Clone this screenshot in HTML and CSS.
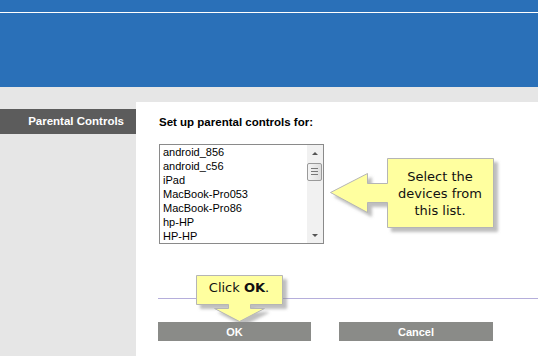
FILE: index.html
```html
<!DOCTYPE html>
<html lang="en">

<head>
	<meta charset="utf-8">
	<title>Parental Controls</title>
	<link rel="stylesheet" href="styles.css">
</head>

<body>
	<div class="header">
		<div class="headerLine"></div>
	</div>

	<div class="main">
		<div class="sidebar">
			<div class="tab">Parental Controls</div>
		</div>

		<div class="panel">
			<h3 class="title">Set up parental controls for:</h3>

			<div class="listBox">
				<ul class="devices">
					<li>android_856</li>
					<li>android_c56</li>
					<li>iPad</li>
					<li>MacBook-Pro053</li>
					<li>MacBook-Pro86</li>
					<li>hp-HP</li>
					<li>HP-HP</li>
				</ul>
				<div class="scrollBar">
					<span class="arrowUp"></span>
					<span class="thumb"><i></i><i></i><i></i></span>
					<span class="arrowDown"></span>
				</div>
			</div>

			<hr class="divider">

			<div class="buttons">
				<button class="btn">OK</button>
				<button class="btn">Cancel</button>
			</div>
		</div>
	</div>

	<!-- callouts drawn over the page -->
	<div class="callout calloutList">
		<svg width="180" height="90" viewBox="325 152 180 90">
			<defs>
				<filter id="shadow" x="-10%" y="-10%" width="130%" height="130%">
					<feDropShadow dx="4" dy="4" stdDeviation="1.5" flood-color="#888" flood-opacity="0.55"/>
				</filter>
			</defs>
			<polygon filter="url(#shadow)" fill="#ffff9f" stroke="#b5b5b5" stroke-width="1"
				points="387.5,158.5 493.5,158.5 493.5,227.5 387.5,227.5 387.5,202.5 367.5,202.5 367.5,212.5 330.5,192.5 367.5,173.5 367.5,183.5 387.5,183.5"/>
		</svg>
		<div class="calloutText listText">Select the<br>devices from<br>this list.</div>
	</div>

	<div class="callout calloutOk">
		<svg width="100" height="56" viewBox="190 270 100 56">
			<polygon filter="url(#shadow)" fill="#ffff9f" stroke="#b5b5b5" stroke-width="1"
				points="196.5,275.5 282.5,275.5 282.5,304.5 250.5,304.5 250.5,308.5 264.5,308.5 239.5,321.5 214.5,308.5 228.5,308.5 228.5,304.5 196.5,304.5"/>
		</svg>
		<div class="calloutText okText">Click <b>OK</b>.</div>
	</div>
</body>

</html>
```

FILE: styles.css
```css
* {
	margin: 0;
	padding: 0;
	box-sizing: border-box;
}

body {
	width: 538px;
	height: 356px;
	overflow: hidden;
	background-color: #e6e6e6;
	font-family: "Liberation Sans", Arial, sans-serif;
	position: relative;
}

.header {
	height: 87px;
	background-color: #2a70b8;
	padding-top: 12px;
}

.headerLine {
	height: 1px;
	background-color: #fff;
}

.main {
	display: flex;
	padding-top: 15px;
	height: 269px;
}

.sidebar {
	width: 136px;
	padding-top: 7px;
}

.tab {
	height: 25px;
	line-height: 25px;
	background-color: #5c5c5c;
	color: #fff;
	font-weight: bold;
	font-size: 11.5px;
	text-align: right;
	padding-right: 12px;
}

.panel {
	flex: 1;
	background-color: #fff;
	padding-top: 13px;
}

.title {
	margin-left: 23px;
	font-size: 11.5px;
	line-height: 14px;
	color: #000;
}

.listBox {
	margin: 15px 0 0 23px;
	width: 165px;
	height: 100px;
	border: 1px solid #8a8a8a;
	display: flex;
}

.devices {
	flex: 1;
	list-style: none;
	padding: 0 0 0 3px;
	font-size: 11px;
	line-height: 14px;
	color: #000;
}

.scrollBar {
	width: 16px;
	background-color: #f1f1f1;
	position: relative;
}

.arrowUp,
.arrowDown {
	position: absolute;
	left: 5px;
	width: 0;
	height: 0;
	border-left: 3px solid transparent;
	border-right: 3px solid transparent;
}

.arrowUp {
	top: 7px;
	border-bottom: 3px solid #555;
}

.arrowDown {
	bottom: 6px;
	border-top: 3px solid #555;
}

.thumb {
	position: absolute;
	top: 18px;
	left: 0;
	width: 15px;
	height: 18px;
	border: 1px solid #9a9a9a;
	border-radius: 2px;
	background: linear-gradient(to right, #f4f4f4, #dedede);
	padding: 4px 0 0 3px;
}

.thumb i {
	display: block;
	width: 7px;
	height: 1px;
	margin-bottom: 2px;
	background-color: #777;
}

.divider {
	margin: 54px 0 0 22px;
	border: none;
	height: 1px;
	background-color: #b5aedb;
}

.buttons {
	display: flex;
	gap: 28px;
	margin: 23px 0 0 22px;
}

.btn {
	width: 153px;
	height: 19px;
	border: none;
	background-color: #8a8b88;
	color: #fff;
	font-family: "Liberation Sans", Arial, sans-serif;
	font-weight: bold;
	font-size: 11px;
}

.btn + .btn {
	width: 154px;
}

/* overlays */
.callout {
	position: absolute;
}

.callout svg {
	display: block;
}

.calloutList {
	left: 325px;
	top: 152px;
}

.calloutOk {
	left: 190px;
	top: 270px;
}

.calloutText {
	position: absolute;
	font-family: "DejaVu Sans", Verdana, sans-serif;
	font-size: 13px;
	color: #111;
	text-align: center;
}

.listText {
	left: 62px;
	top: 16px;
	width: 106px;
	line-height: 17px;
}

.okText {
	left: 6px;
	top: 10px;
	width: 86px;
	line-height: 16px;
}
```
